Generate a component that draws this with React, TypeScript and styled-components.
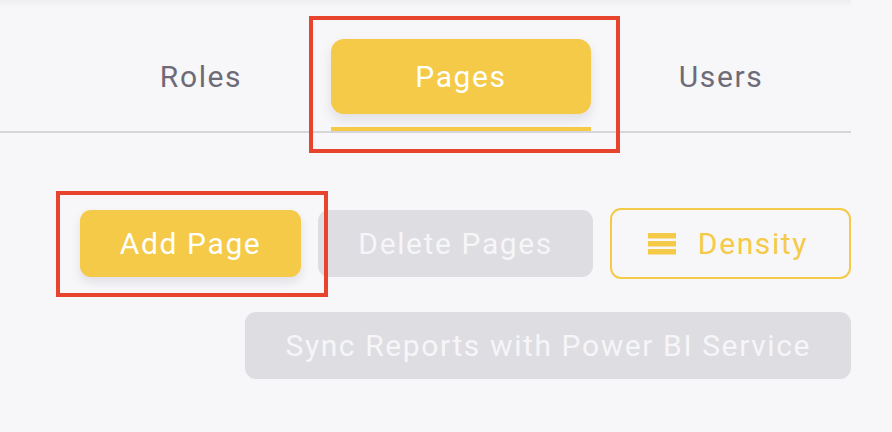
import React from "react";
import styled, { createGlobalStyle } from "styled-components";

const Global = createGlobalStyle`
  html, body { margin: 0; padding: 0; background: #f7f7f9; }
  body { font-family: Roboto, "Noto Sans", sans-serif; }
  * { box-sizing: border-box; }
`;

const Screen = styled.div`
  position: relative;
  width: 892px;
  height: 432px;
  overflow: hidden;
  background: #f7f7f9;
`;

const TopShade = styled.div`
  height: 8px;
  background: linear-gradient(#eeeef1, #f7f7f9);
`;

const Content = styled.div`
  width: 851px;
  display: flex;
  flex-direction: column;
`;

const TabBar = styled.div`
  display: flex;
  justify-content: flex-end;
  border-bottom: 2px solid #d6d5da;
  padding-top: 31px;
`;

const Tab = styled.div`
  width: 260px;
  display: flex;
  flex-direction: column;
  align-items: stretch;
  gap: 13px;
`;

const TabLabel = styled.div<{ $active?: boolean }>`
  height: 75px;
  display: flex;
  align-items: center;
  justify-content: center;
  border-radius: 13px;
  font-size: 30px;
  letter-spacing: 1.6px;
  color: ${(p) => (p.$active ? "#ffffff" : "#6e6b78")};
  background: ${(p) => (p.$active ? "#f4ca48" : "transparent")};
  box-shadow: ${(p) =>
    p.$active ? "0 6px 12px rgba(60, 60, 90, 0.12)" : "none"};
`;

const Indicator = styled.div<{ $active?: boolean }>`
  height: 4px;
  background: ${(p) => (p.$active ? "#f4ca48" : "transparent")};
`;

const Toolbar = styled.div`
  margin-top: 75px;
  display: flex;
  flex-wrap: wrap;
  justify-content: flex-end;
  align-items: center;
  column-gap: 17px;
  row-gap: 33px;
`;

const Button = styled.button<{ $variant: "primary" | "disabled" | "outline" }>`
  height: ${(p) => (p.$variant === "outline" ? "71px" : "67px")};
  padding: ${(p) => (p.$variant === "outline" ? "0 41px 0 36px" : "0 40px")};
  display: flex;
  align-items: center;
  gap: 22px;
  border-radius: 11px;
  font-family: Roboto, "Noto Sans", sans-serif;
  font-size: 30px;
  letter-spacing: 1.6px;
  cursor: pointer;
  border: ${(p) => (p.$variant === "outline" ? "2px solid #f4ca48" : "none")};
  color: ${(p) =>
    p.$variant === "primary"
      ? "#ffffff"
      : p.$variant === "outline"
      ? "#f4ca48"
      : "#f6f6f8"};
  background: ${(p) =>
    p.$variant === "primary"
      ? "#f4ca48"
      : p.$variant === "disabled"
      ? "#dedde2"
      : "transparent"};
  box-shadow: ${(p) =>
    p.$variant === "primary" ? "0 5px 10px rgba(60, 60, 90, 0.12)" : "none"};
`;

const Highlight = styled.div`
  position: absolute;
  border: 4px solid #e7442d;
`;

const DensityIcon = () => (
  <svg width="28" height="22" viewBox="0 0 28 22" fill="#f4ca48">
    <rect x="0" y="0" width="28" height="5.5" />
    <rect x="0" y="8" width="28" height="5.5" />
    <rect x="0" y="16" width="28" height="5.5" />
  </svg>
);

export default function App() {
  return (
    <Screen>
      <Global />
      <Content>
        <TopShade />
        <TabBar>
          <Tab>
            <TabLabel>Roles</TabLabel>
            <Indicator />
          </Tab>
          <Tab>
            <TabLabel $active>Pages</TabLabel>
            <Indicator $active />
          </Tab>
          <Tab>
            <TabLabel>Users</TabLabel>
            <Indicator />
          </Tab>
        </TabBar>
        <Toolbar>
          <Button $variant="primary">Add Page</Button>
          <Button $variant="disabled">Delete Pages</Button>
          <Button $variant="outline">
            <DensityIcon />
            Density
          </Button>
          <Button $variant="disabled">Sync Reports with Power BI Service</Button>
        </Toolbar>
      </Content>
      <Highlight style={{ left: 309, top: 16, width: 311, height: 137 }} />
      <Highlight style={{ left: 56, top: 191, width: 272, height: 106 }} />
    </Screen>
  );
}
